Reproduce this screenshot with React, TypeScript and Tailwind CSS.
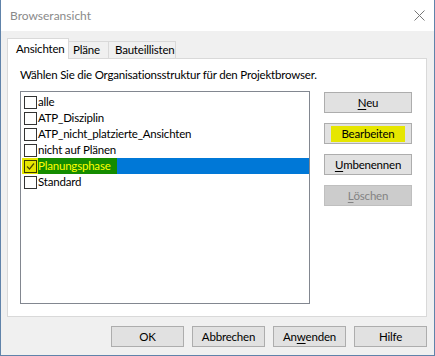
import React from 'react';

const font = { fontFamily: 'Lato, "Noto Sans", sans-serif' };

const items = [
  { label: 'alle', checked: false },
  { label: 'ATP_Disziplin', checked: false },
  { label: 'ATP_nicht_platzierte_Ansichten', checked: false },
  { label: 'nicht auf Plänen', checked: false },
  { label: 'Planungsphase', checked: true, selected: true },
  { label: 'Standard', checked: false },
];

const Btn: React.FC<{ children: React.ReactNode; disabled?: boolean; className?: string }> = ({
  children,
  disabled,
  className = '',
}) => (
  <div
    className={`flex items-center justify-center h-[21px] border leading-none ${
      disabled ? 'bg-[#cccccc] border-[#bfbfbf] text-[#838383]' : 'bg-[#e1e1e1] border-[#adadad] text-black'
    } ${className}`}
  >
    {children}
  </div>
);

const CheckBox: React.FC<{ checked: boolean; highlight?: boolean }> = ({ checked, highlight }) => (
  <div className={`flex items-center justify-center w-[15px] h-[16px] ${highlight ? 'bg-[#e6e600]' : ''}`}>
    <div
      className={`w-[13px] h-[13px] border ${
        highlight ? 'border-[#3a3a00] bg-[#e6e600]' : 'border-[#333333] bg-white'
      } flex items-center justify-center`}
    >
      {checked && (
        <svg width="9" height="9" viewBox="0 0 9 9">
          <path d="M1 4.5 L3.5 7 L8 1.5" fill="none" stroke="#4a4a00" strokeWidth="1.2" />
        </svg>
      )}
    </div>
  </div>
);

export default function App() {
  return (
    <div
      className="w-[435px] h-[356px] flex flex-col bg-[#f0f0f0] border-l border-r border-b border-[#6083aa] text-[11.5px] tracking-[-0.2px]"
      style={font}
    >
      {/* Title bar */}
      <div className="h-[31px] bg-white flex items-center justify-between pl-[9px] pr-[9px] shrink-0">
        <span className="text-[12px] tracking-normal text-[#8a8a8a]">Browseransicht</span>
        <svg width="11" height="11" viewBox="0 0 11 11">
          <path d="M0.5 0.5 L10.5 10.5 M10.5 0.5 L0.5 10.5" stroke="#777777" strokeWidth="1" />
        </svg>
      </div>

      <div className="flex-1 flex flex-col pl-[6px] pr-[7px] pt-[7px]">
        {/* Tabs */}
        <div className="flex items-end h-[20px] relative z-10">
          <div className="w-[62px] h-[21px] -mb-[1px] bg-white border-t border-l border-r border-[#d9d9d9] flex items-center pl-[8px] text-black">
            Ansichten
          </div>
          <div className="w-[40px] h-[17px] bg-[#f0f0f0] border-t border-r border-[#d9d9d9] flex items-center pl-[4px] text-black">
            Pläne
          </div>
          <div className="w-[67px] h-[17px] bg-[#f0f0f0] border-t border-r border-[#d9d9d9] flex items-center pl-[6px] text-black">
            Bauteillisten
          </div>
        </div>

        {/* Panel */}
        <div className="h-[259px] bg-white border border-[#d9d9d9] pl-[12px] pt-[8px]">
          <div className="h-[16px] flex items-center text-black">
            Wählen Sie die Organisationsstruktur für den Projektbrowser.
          </div>
          <div className="flex mt-[8px]">
            <div className="w-[290px] h-[213px] border border-[#828790] bg-white pt-[2px] pl-[1px]">
              {items.map((it) => (
                <div key={it.label} className={`flex h-[16px] items-center ${it.selected ? 'bg-[#0078d7]' : ''}`}>
                  <div className={`h-[16px] pl-[1px] ${it.selected ? 'bg-[#e6e600]' : 'bg-white'}`}>
                    <CheckBox checked={it.checked} highlight={it.selected} />
                  </div>
                  <span
                    className={`h-[16px] flex items-center pr-[6px] ${
                      it.selected ? 'bg-[#148c00] text-[#ffff00]' : 'text-black'
                    }`}
                  >
                    {it.label}
                  </span>
                </div>
              ))}
            </div>
            <div className="w-[88px] ml-[14px] mt-[1px] flex flex-col gap-[10px]">
              <Btn>
                <span className="underline underline-offset-2">N</span>eu
              </Btn>
              <Btn>
                <span className="bg-[#e6e600] w-[74px] h-[16px] flex items-center justify-center">Bearbeiten</span>
              </Btn>
              <Btn>
                <span className="underline underline-offset-2">U</span>mbenennen
              </Btn>
              <Btn disabled>
                <span className="underline underline-offset-2">L</span>öschen
              </Btn>
            </div>
          </div>
        </div>

        {/* Bottom buttons */}
        <div className="flex justify-end gap-[8px] mt-[9px]">
          <Btn className="w-[73px]">OK</Btn>
          <Btn className="w-[73px]">Abbrechen</Btn>
          <Btn className="w-[73px]">
            An<span className="underline underline-offset-2">w</span>enden
          </Btn>
          <Btn className="w-[73px]">Hilfe</Btn>
        </div>
      </div>
    </div>
  );
}
